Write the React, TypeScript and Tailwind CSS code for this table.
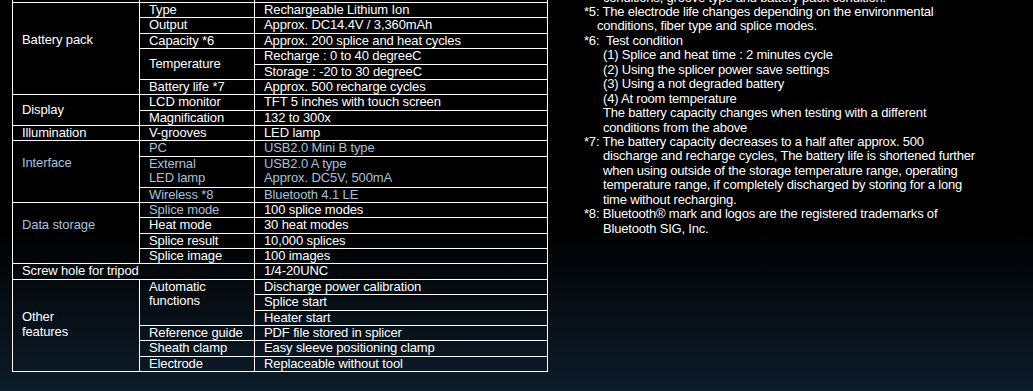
import React from "react";

type C = { cls: string; text?: React.ReactNode };

const base =
  "border-t border-r border-white pl-[9px] whitespace-nowrap overflow-visible";
const mid = " flex items-center leading-[14.375px]";
const top = " flex flex-col items-start leading-[14.45px]";
const blue = " text-[#a9c1da]";

const cells: C[] = [
  // partial row above
  { cls: base + " row-start-1 col-start-1" },
  { cls: base + " row-start-1 col-start-2" },
  { cls: base + " row-start-1 col-start-3" },

  // Battery pack
  { cls: base + top + " row-start-2 row-span-6 col-start-1 pt-[29.5px]", text: "Battery pack" },
  { cls: base + mid + " row-start-2 col-start-2", text: "Type" },
  { cls: base + mid + " row-start-3 col-start-2", text: "Output" },
  { cls: base + mid + " row-start-4 col-start-2", text: "Capacity *6" },
  { cls: base + mid + " row-start-5 row-span-2 col-start-2", text: "Temperature" },
  { cls: base + mid + " row-start-7 col-start-2", text: "Battery life *7" },
  { cls: base + mid + " row-start-2 col-start-3", text: "Rechargeable Lithium Ion" },
  { cls: base + mid + " row-start-3 col-start-3", text: "Approx. DC14.4V / 3,360mAh" },
  { cls: base + mid + " row-start-4 col-start-3", text: "Approx. 200 splice and heat cycles" },
  { cls: base + mid + " row-start-5 col-start-3", text: "Recharge : 0 to 40 degreeC" },
  { cls: base + mid + " row-start-6 col-start-3", text: "Storage : -20 to 30 degreeC" },
  { cls: base + mid + " row-start-7 col-start-3", text: "Approx. 500 recharge cycles" },

  // Display
  { cls: base + mid + " row-start-8 row-span-2 col-start-1", text: "Display" },
  { cls: base + mid + " row-start-8 col-start-2", text: "LCD monitor" },
  { cls: base + mid + " row-start-9 col-start-2", text: "Magnification" },
  { cls: base + mid + " row-start-8 col-start-3", text: "TFT 5 inches with touch screen" },
  { cls: base + mid + " row-start-9 col-start-3", text: "132 to 300x" },

  // Illumination
  { cls: base + mid + " row-start-10 col-start-1", text: "Illumination" },
  { cls: base + mid + " row-start-10 col-start-2", text: "V-grooves" },
  { cls: base + mid + " row-start-10 col-start-3", text: "LED lamp" },

  // Interface
  { cls: base + top + blue + " row-start-11 row-span-4 col-start-1 pt-[15px]", text: "Interface" },
  { cls: base + mid + blue + " row-start-11 col-start-2", text: "PC" },
  {
    cls: base + top + blue + " row-start-12 row-span-2 col-start-2 pt-[0px]",
    text: (
      <>
        <span>External</span>
        <span>LED lamp</span>
      </>
    ),
  },
  { cls: base + mid + blue + " row-start-14 col-start-2", text: "Wireless *8" },
  { cls: base + mid + blue + " row-start-11 col-start-3", text: "USB2.0 Mini B type" },
  {
    cls: base + top + blue + " row-start-12 row-span-2 col-start-3 pt-[0px]",
    text: (
      <>
        <span>USB2.0 A type</span>
        <span>Approx. DC5V, 500mA</span>
      </>
    ),
  },
  { cls: base + mid + blue + " row-start-14 col-start-3", text: "Bluetooth 4.1 LE" },

  // Data storage
  { cls: base + top + blue + " row-start-15 row-span-4 col-start-1 pt-[15px]", text: "Data storage" },
  { cls: base + mid + blue + " row-start-15 col-start-2", text: "Splice mode" },
  { cls: base + mid + " row-start-16 col-start-2", text: "Heat mode" },
  { cls: base + mid + " row-start-17 col-start-2", text: "Splice result" },
  { cls: base + mid + " row-start-18 col-start-2", text: "Splice image" },
  { cls: base + mid + " row-start-15 col-start-3", text: "100 splice modes" },
  { cls: base + mid + " row-start-16 col-start-3", text: "30 heat modes" },
  { cls: base + mid + " row-start-17 col-start-3", text: "10,000 splices" },
  { cls: base + mid + " row-start-18 col-start-3", text: "100 images" },

  // Screw hole
  { cls: base + mid + " row-start-19 col-start-1 col-span-2", text: "Screw hole for tripod" },
  { cls: base + mid + " row-start-19 col-start-3", text: "1/4-20UNC" },

  // Other features
  {
    cls: base + " flex flex-col items-start leading-[15px] row-start-20 row-span-6 col-start-1 pt-[29px]",
    text: (
      <>
        <span>Other</span>
        <span>features</span>
      </>
    ),
  },
  {
    cls: base + top + " row-start-20 row-span-3 col-start-2 pt-[0px]",
    text: (
      <>
        <span>Automatic</span>
        <span>functions</span>
      </>
    ),
  },
  { cls: base + mid + " row-start-23 col-start-2", text: "Reference guide" },
  { cls: base + mid + " row-start-24 col-start-2", text: "Sheath clamp" },
  { cls: base + mid + " row-start-25 col-start-2", text: "Electrode" },
  { cls: base + mid + " row-start-20 col-start-3", text: "Discharge power calibration" },
  { cls: base + mid + " row-start-21 col-start-3", text: "Splice start" },
  { cls: base + mid + " row-start-22 col-start-3", text: "Heater start" },
  { cls: base + mid + " row-start-23 col-start-3", text: "PDF file stored in splicer" },
  { cls: base + mid + " row-start-24 col-start-3", text: "Easy sleeve positioning clamp" },
  { cls: base + mid + " row-start-25 col-start-3", text: "Replaceable without tool" },
];

type L = { indent: string; text: string };

const notes: L[] = [
  { indent: "pl-[19px]", text: "conditions, groove type and battery pack condition." },
  { indent: "pl-0", text: "*5: The electrode life changes depending on the environmental" },
  { indent: "pl-[13px]", text: "conditions, fiber type and splice modes." },
  { indent: "pl-0", text: "*6:  Test condition" },
  { indent: "pl-[19px]", text: "(1) Splice and heat time : 2 minutes cycle" },
  { indent: "pl-[19px]", text: "(2) Using the splicer power save settings" },
  { indent: "pl-[19px]", text: "(3) Using a not degraded battery" },
  { indent: "pl-[19px]", text: "(4) At room temperature" },
  { indent: "pl-[19px]", text: "The battery capacity changes when testing with a different" },
  { indent: "pl-[19px]", text: "conditions from the above" },
  { indent: "pl-0", text: "*7: The battery capacity decreases to a half after approx. 500" },
  { indent: "pl-[19px]", text: "discharge and recharge cycles, The battery life is shortened further" },
  { indent: "pl-[19px]", text: "when using outside of the storage temperature range, operating" },
  { indent: "pl-[19px]", text: "temperature range, if completely discharged by storing for a long" },
  { indent: "pl-[19px]", text: "time without recharging." },
  { indent: "pl-0", text: "*8: Bluetooth® mark and logos are the registered trademarks of" },
  { indent: "pl-[19px]", text: "Bluetooth SIG, Inc." },
];

export default function App() {
  return (
    <div
      className="w-full h-[391px] overflow-hidden text-white text-[13px] bg-[linear-gradient(to_bottom,#000000_0%,#000000_58%,#0d1c2a_100%)]"
      style={{ fontFamily: '"Liberation Sans", Arial, sans-serif' }}
    >
      <div className="flex items-start">
        <div className="ml-[12px] mt-[-13.375px] grid grid-cols-[127px_115px_293px] grid-rows-[repeat(25,15.375px)] border-l border-b border-white shrink-0 tracking-[-0.12px]">
          {cells.map((c, i) => (
            <div key={i} className={c.cls}>
              {c.text}
            </div>
          ))}
        </div>
        <div className="ml-[36px] mt-[-9.5px] flex flex-col leading-[14.45px] whitespace-pre tracking-[-0.19px]">
          {notes.map((n, i) => (
            <div key={i} className={n.indent}>
              {n.text}
            </div>
          ))}
        </div>
      </div>
    </div>
  );
}
